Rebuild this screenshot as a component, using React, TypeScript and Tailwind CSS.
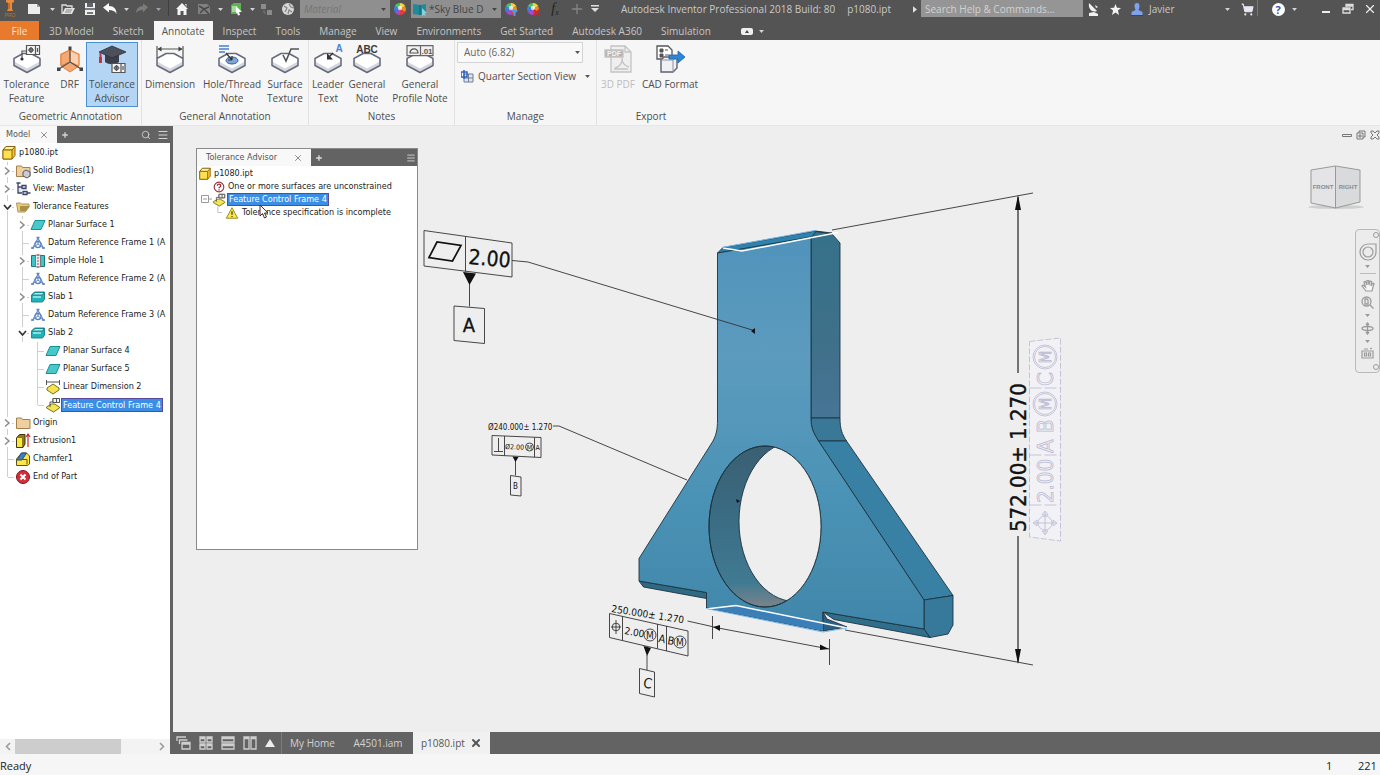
import type { ReactNode } from "react";
import { Menu, Plus, Search, ShoppingCart, X } from "lucide-react";

function Caret({ className = "text-gray-300" }: { className?: string }) {
  return (
    <svg viewBox="0 0 8 5" className={`h-[3px] w-[5px] shrink-0 ${className}`} fill="currentColor">
      <path d="M0 0h8L4 5z" />
    </svg>
  );
}

function IconButton({ label, className, children }: { label: string; className: string; children: ReactNode }) {
  return (
    <button type="button" aria-label={label} className={`flex h-[18px] shrink-0 items-center justify-center ${className}`}>
      {children}
    </button>
  );
}

function ColorWheel() {
  return (
    <g>
      <path d="M7 7V1A6 6 0 0 1 12.2 4z" fill="#f6d33c" />
      <path d="M7 7L12.2 4A6 6 0 0 1 12.2 10z" fill="#f08a24" />
      <path d="M7 7L12.2 10A6 6 0 0 1 7 13z" fill="#e23b3b" />
      <path d="M7 7V13A6 6 0 0 1 1.8 10z" fill="#a24bd0" />
      <path d="M7 7L1.8 10A6 6 0 0 1 1.8 4z" fill="#3b7fe0" />
      <path d="M7 7L1.8 4A6 6 0 0 1 7 1z" fill="#4cc06a" />
      <circle cx="7" cy="6" r="2.2" fill="#fff" opacity=".7" />
    </g>
  );
}

function TitleBar() {
  return (
    <div className="flex h-[21px] items-start overflow-hidden bg-[#545454] text-[10px] text-[#c9c9c9]">
      <IconButton label="Inventor" className="w-5">
        <svg viewBox="0 0 12 18" className="h-[18px] w-3">
          <path d="M2 0h8v2L8 3v6l1 2H3l1-2V3L2 2z" fill="#e98a3a" />
          <path d="M4.500 3h1v6h-1z" fill="#9b5415" />
          <text x="6" y="17" fontSize="5" textAnchor="middle" fill="#c06f2c" fontFamily="Liberation Sans, sans-serif">PRO</text>
        </svg>
      </IconButton>
      <IconButton label="New" className="w-7">
        <svg viewBox="0 0 14 12" className="h-3 w-3.5">
          <path d="M1 1h9l3 3v7H1z" fill="#ececec" />
          <path d="M10 1v3h3z" fill="#9a9a9a" />
        </svg>
      </IconButton>
      <IconButton label="New options" className="w-2"><Caret /></IconButton>
      <IconButton label="Open" className="w-6">
        <svg viewBox="0 0 14 12" className="h-3 w-3.5">
          <path d="M1 11V2h4l1 1h5v2" fill="none" stroke="#e0e0e0" strokeWidth="1.300" />
          <path d="M1 11l3-6h10l-3 6z" fill="#e0e0e0" />
          <path d="M5 7h6M4 9h6" stroke="#888" />
        </svg>
      </IconButton>
      <IconButton label="Save" className="w-5">
        <svg viewBox="0 0 12 14" className="h-3.5 w-3">
          <path d="M1 1h10v12H1z" fill="#efefef" />
          <path d="M3 1h6v4H3z" fill="#5d6470" />
          <path d="M0 7h12" stroke="#545454" strokeWidth="1.500" />
          <path d="M3 10h6v2H3z" fill="#777" />
        </svg>
      </IconButton>
      <IconButton label="Undo" className="w-5">
        <svg viewBox="0 0 14 12" className="h-3 w-3.5">
          <path d="M0 4.500L6 0v3c5 0 7.500 3 7.500 8-1.500-3-4-4-7.500-4v2.500z" fill="#fafafa" />
        </svg>
      </IconButton>
      <IconButton label="Undo options" className="w-3"><Caret /></IconButton>
      <IconButton label="Redo" className="w-5">
        <svg viewBox="0 0 14 12" className="h-3 w-3.5">
          <path d="M13 4L8 0.500V3C4 3 1 6 1 10c1-2 4-3 7-3v2.500z" fill="#7b7b7b" />
        </svg>
      </IconButton>
      <IconButton label="Redo options" className="w-3"><Caret className="text-gray-400" /></IconButton>
      <div className="flex h-5 w-2 shrink-0 justify-center"><span className="h-4 w-px bg-[#404040]" /></div>
      <IconButton label="Home" className="w-5">
        <svg viewBox="0 0 12 12" className="h-3 w-3">
          <path d="M6 0l6 6h-1.500v6h-3V8h-3v4h-3V6H0z" fill="#f4f4f4" />
          <path d="M9 1h1.500v3z" fill="#f4f4f4" />
        </svg>
      </IconButton>
      <IconButton label="Return" className="w-6">
        <svg viewBox="0 0 14 12" className="h-3 w-3.5">
          <path d="M1 1h9l3 3v7H1z" fill="#818181" />
          <path d="M2 3l5 3 5-2M3 10l4-4 5 5" stroke="#474747" fill="none" strokeWidth="1.500" />
        </svg>
      </IconButton>
      <IconButton label="Return options" className="w-2"><Caret /></IconButton>
      <IconButton label="Select" className="w-6">
        <svg viewBox="0 0 13 14" className="h-3.5 w-[13px]">
          <path d="M1 3l3-2h7v8l-3 3H1z" fill="#5db455" />
          <path d="M2 4h5v6H2z" fill="#a5dc9b" />
          <path d="M6 4l6 6H9l1 3-2 .500-1-3-1 1z" fill="#fff" />
        </svg>
      </IconButton>
      <IconButton label="Select options" className="w-2"><Caret /></IconButton>
      <IconButton label="Update" className="w-5">
        <svg viewBox="0 0 14 14" className="h-3.5 w-3.5">
          <path d="M2 2h5v5H2zM8 8h5v5H8z" fill="#8b8b8b" />
          <path d="M5 8v3h2" stroke="#777" fill="none" />
        </svg>
      </IconButton>
      <IconButton label="Appearance browser" className="w-6">
        <svg viewBox="0 0 14 14" className="h-3.5 w-3.5">
          <circle cx="7" cy="7" r="6" fill="#d7d7d7" />
          <path d="M3 4l3 2-2 4M8 2l2 3 3 1M7 12l1-4 3 2" fill="none" stroke="#828282" strokeWidth="1.200" />
        </svg>
      </IconButton>
      <label className="flex h-[18px] w-[90px] shrink-0 items-center bg-[#8f8f8f] pr-1">
        <select aria-label="Material" disabled className="min-w-0 flex-1 appearance-none bg-transparent pl-1 text-[#767676] italic">
          <option>Material</option>
        </select>
        <Caret className="text-[#444]" />
      </label>
      <IconButton label="Adjust appearance" className="w-5">
        <svg viewBox="0 0 14 14" className="h-3.5 w-3.5"><ColorWheel /></svg>
      </IconButton>
      <label className="ml-px flex h-[18px] w-[90px] shrink-0 items-center bg-[#8f8f8f] pr-1 pl-0.5">
        <svg viewBox="0 0 14 13" className="h-[13px] w-3.5 shrink-0">
          <path d="M0 1l7 1 6-1v10l-6 1-7-1z" fill="#1f8a99" />
          <path d="M7 2v10" stroke="#0f6370" />
          <path d="M9 5l5 5-2 .500L13 13l-2-1-2 1z" fill="#8ed0d8" />
        </svg>
        <select aria-label="Appearance" className="mr-2 min-w-0 flex-1 appearance-none bg-transparent pl-0.5 text-[#444]">
          <option>*Sky Blue D</option>
        </select>
        <Caret className="text-[#444]" />
      </label>
      <IconButton label="Adjust" className="w-5">
        <svg viewBox="0 0 14 14" className="h-3.5 w-3.5">
          <ColorWheel />
          <path d="M7 8h7l-2.500 3v3h-2v-3z" fill="#4b9be8" />
        </svg>
      </IconButton>
      <IconButton label="Clear overrides" className="w-6">
        <svg viewBox="0 0 14 14" className="h-3.5 w-3.5">
          <ColorWheel />
          <path d="M8 8l5 5M13 8l-5 5" stroke="#d5232b" strokeWidth="2" />
        </svg>
      </IconButton>
      <IconButton label="Parameters" className="w-5">
        <span className="font-['Liberation_Serif',serif] text-[14px] leading-4 text-[#222] italic">f<sub className="text-[8px]">x</sub></span>
      </IconButton>
      <IconButton label="Measure" className="w-6"><Plus className="size-4 text-[#858585]" /></IconButton>
      <IconButton label="Customize" className="w-3">
        <svg viewBox="0 0 8 8" className="size-2" fill="#e0e0e0"><path d="M0 0h8v1.500H0zM0 3h8L4 7z" /></svg>
      </IconButton>
      <span className="ml-5 truncate leading-[18px]">Autodesk Inventor Professional 2018 Build: 80</span>
      <span className="ml-3 leading-[18px]">p1080.ipt</span>

      <div className="ml-auto flex shrink-0 items-start">
        <IconButton label="Expand search" className="w-3">
          <svg viewBox="0 0 5 8" className="h-[7px] w-1" fill="#e0e0e0"><path d="M0 0l5 4-5 4z" /></svg>
        </IconButton>
        <input
          type="search"
          aria-label="Search Help & Commands"
          placeholder="Search Help & Commands..."
          className="h-[17px] w-[162px] rounded-none bg-[#959595] px-1 text-[#eee] placeholder:text-[#d2d2d2]"
        />
        <IconButton label="Communication center" className="w-5">
          <svg viewBox="0 0 12 13" className="h-[13px] w-3" fill="#f2f2f2">
            <path d="M2 0l8 8c-5 2-9-2-8-8zM2 10l5-1 4 2v2H2zM8 2l3 2-2 1z" />
          </svg>
        </IconButton>
        <IconButton label="Favorites" className="w-6">
          <svg viewBox="0 0 12 12" className="size-[11px]" fill="#f4f4f4">
            <path d="M6 0l1.600 4.200L12 4.400 8.600 7.200 9.800 12 6 9.200 2.200 12l1.200-4.800L0 4.400l4.400-.2z" />
          </svg>
        </IconButton>
        <IconButton label="Account" className="w-5">
          <svg viewBox="0 0 12 13" className="h-[13px] w-3" fill="#7ea2ec">
            <path d="M3.500 3a2.500 3 0 0 1 5 0c0 2-1 3-1 4l4 2v3H.500V9l4-2c0-1-1-2-1-4z" />
            <path d="M0 12.500h12" stroke="#28467c" />
          </svg>
        </IconButton>
        <span className="w-[74px] pl-0.5 leading-[18px]">Javier</span>
        <IconButton label="Account options" className="w-3"><Caret /></IconButton>
        <IconButton label="App store" className="ml-1 w-5"><ShoppingCart className="size-[13px] fill-[#e8e8f4] text-[#e8e8f4]" /></IconButton>
        <span className="h-4 w-px bg-[#777]" />
        <IconButton label="Help" className="ml-2.5 w-5">
          <span className="flex size-[13px] items-center justify-center rounded-full bg-white text-[11px] leading-none font-bold text-[#3d55a8]">?</span>
        </IconButton>
        <IconButton label="Help options" className="w-3"><Caret /></IconButton>
        <IconButton label="Minimize" className="ml-4 w-5">
          <svg viewBox="0 0 8 8" className="size-2"><path d="M0 7h8" stroke="#eee" strokeWidth="2" /></svg>
        </IconButton>
        <IconButton label="Restore" className="w-6">
          <svg viewBox="0 0 12 12" className="size-3" fill="none" stroke="#ddd" strokeWidth="1.300">
            <path d="M1 5h7v5H1zM1 6.500h7M4 4V1.500h7v5H9M4 3h7" />
          </svg>
        </IconButton>
        <IconButton label="Close" className="w-5"><X className="size-3.5 text-[#eee]" /></IconButton>
      </div>
    </div>
  );
}

const tabs = [
  "3D Model",
  "Sketch",
  "Annotate",
  "Inspect",
  "Tools",
  "Manage",
  "View",
  "Environments",
  "Get Started",
  "Autodesk A360",
  "Simulation",
];

function RibbonTabs() {
  return (
    <nav className="flex h-[19px] items-stretch gap-px bg-[#545454] text-[10px] text-[#c6c6c6]">
      <button type="button" className="w-[39px] bg-[#e97a2c] pt-px text-[#fbe3cf]">File</button>
      {tabs.map((tab) => (
        <button
          key={tab}
          type="button"
          className={tab === "Annotate" ? "bg-[#f6f6f6] px-2 pt-px text-[#555] whitespace-nowrap" : "px-[9px] pt-px whitespace-nowrap"}
        >
          {tab}
        </button>
      ))}
      <button type="button" aria-label="Minimize ribbon" className="ml-5 flex items-center gap-1.5 pt-px">
        <svg viewBox="0 0 12 7" className="h-[7px] w-3">
          <rect width="12" height="7" rx="2" fill="#eee" />
          <path d="M4 5l2-3 2 3z" fill="#444" />
        </svg>
        <Caret />
      </button>
    </nav>
  );
}

// the white slab that most ribbon icons sit on
function Slab() {
  return (
    <g stroke="#666a7a" strokeWidth="1.500" strokeLinejoin="round">
      <path d="M1 13.500L10 8.500h8l9 5v7L14 27.500 1 20.500z" fill="#d4d7e0" />
      <path d="M2 14l8.500-4.500h7L26 14v3l-12 6.500L2 17z" fill="#fff" stroke="none" />
    </g>
  );
}

function FrameSign({ x, y }: { x: number; y: number }) {
  return (
    <g transform={`translate(${x} ${y})`} fill="none" stroke="#555" strokeWidth="1.200">
      <path d="M.500 .500h13v9H.500zM9.500 .500v9" fill="#f4f4f4" />
      <path d="M5 2v6M2 5h6M11.500 3v4" />
      <circle cx="5" cy="5" r="1.800" />
    </g>
  );
}

const ribbonIcons: Record<string, ReactNode> = {
  feature: (
    <>
      <Slab />
      <path d="M9 14V6h5" fill="none" stroke="#555" strokeWidth="1.200" />
      <circle cx="9" cy="14" r="1.600" fill="#333" />
      <FrameSign x={13} y={0} />
    </>
  ),
  drf: (
    <>
      <path d="M14 5l9 4.500V20l-9 6-9-6V9.500z" fill="#fbd0ae" stroke="#e5823c" strokeWidth="1.300" />
      <path d="M14 5v12l-9 4V9.500zM14 17l9 4-9 6-9-6z" fill="#f4a873" stroke="#e5823c" />
      <path d="M14 3v14L3 24M14 17l11 7" stroke="#555" strokeWidth="1.200" fill="none" />
      <path d="M12.500 1.500h3v3.500h-3zM1 22.500h3.500V26H1zM23.500 22.500H27V26h-3.500z" fill="#444" />
    </>
  ),
  advisor: (
    <>
      <path d="M7 10v7c4 3 10 3 14 0v-7z" fill="#3c3f49" />
      <path d="M14 1l14 6-14 6L1 7z" fill="#4c505c" stroke="#2d2f37" strokeWidth=".8" />
      <path d="M2.500 8v9" stroke="#c1343c" strokeWidth="2" />
      <path d="M1 12h3v6H1z" fill="#c1343c" />
      <FrameSign x={13.500} y={18} />
    </>
  ),
  dimension: (
    <>
      <Slab />
      <path d="M1 1v12M27 1v12M2 4h24" stroke="#555" strokeWidth="1.200" fill="none" />
      <path d="M1.500 4l4-2.500v5zM26.500 4l-4-2.500v5z" fill="#444" />
    </>
  ),
  hole: (
    <>
      <Slab />
      <ellipse cx="14" cy="15.500" rx="6" ry="3.500" fill="#7fa6d8" stroke="#355c93" />
      <path d="M1 1h10M1 4h10M1 7h6" stroke="#4a7fd0" strokeWidth="1.600" />
      <path d="M8 8l6 7M14 15v-4M14 15h-4" stroke="#333" fill="none" strokeWidth="1.200" />
    </>
  ),
  surface: (
    <>
      <Slab />
      <path d="M12 10l3 6 5-12h8" fill="none" stroke="#555" strokeWidth="1.600" />
    </>
  ),
  leader: (
    <>
      <Slab />
      <path d="M19 8l-5 5" stroke="#333" strokeWidth="1.400" />
      <path d="M13 8v6.500h6z" fill="#333" />
      <text x="25" y="7" fontSize="10" fontWeight="bold" textAnchor="middle" fill="#3f86dc">A</text>
    </>
  ),
  note: (
    <>
      <Slab />
      <text x="14" y="8" fontSize="10" fontWeight="bold" textAnchor="middle" fill="#3a3a3a">ABC</text>
    </>
  ),
  profile: (
    <>
      <Slab />
      <path d="M1 .700h26v10H1zM14.500 .700v10" fill="#f0f0f0" stroke="#666" strokeWidth="1.200" />
      <path d="M4 8a3.800 4 0 0 1 8 0z" fill="none" stroke="#555" strokeWidth="1.200" />
      <text x="21" y="8.500" fontSize="8" fontWeight="bold" textAnchor="middle" fill="#555">.01</text>
    </>
  ),
  pdf: (
    <g stroke="#c3c3c3" strokeWidth="1.300" fill="none">
      <path d="M7 1h14l6 6v20H7z" fill="#efefef" />
      <path d="M21 1v6h6" />
      <path d="M11 23c5-1 8-6 7-10 0 5 3 8 7 9M10 24h14" />
      <path d="M1 5h18v7H1z" fill="#b4b4b4" />
      <text x="10" y="11" fontSize="7" fontWeight="bold" textAnchor="middle" fill="#f4f4f4" stroke="none">PDF</text>
    </g>
  ),
  cad: (
    <>
      <path d="M1 1h11l4 4v9H1z" fill="#fff" stroke="#555" strokeWidth="1.300" />
      <path d="M4 4h3v3H4zM4 9h3v3H4zM9 5h3M9 10h4" fill="#555" stroke="#555" />
      <path d="M5 15l3-3h13v11l-4 4H5z" fill="#f0f1f5" stroke="#5e6270" strokeWidth="1.400" />
      <path d="M5 15h12v12M17 15l4-3" stroke="#8c90a0" fill="none" />
      <path d="M13 10h9V6l7 6-7 6v-4h-9z" fill="#2f85d8" stroke="#1f62a8" strokeWidth=".8" />
    </>
  ),
};

type RibbonButtonProps = { icon: string; lines: string[]; className: string; disabled?: boolean };

function RibbonButton({ icon, lines, className, disabled }: RibbonButtonProps) {
  return (
    <button type="button" disabled={disabled} className={`flex h-[65px] shrink-0 flex-col items-center border pt-0.5 ${className}`}>
      <svg viewBox="0 0 28 28" className="mb-1 size-7 overflow-visible font-['Liberation_Sans',sans-serif]">{ribbonIcons[icon]}</svg>
      {lines.map((line) => (
        <span key={line} className="leading-[14px] whitespace-nowrap">{line}</span>
      ))}
    </button>
  );
}

function RibbonGroup({ title, className, children }: { title: string; className: string; children: ReactNode }) {
  return (
    <section className={`flex shrink-0 flex-col border-r border-[#e2e2e2] pt-0.5 ${className}`}>
      <div className="flex h-[67px]">{children}</div>
      <h2 className="text-center leading-[18px]">{title}</h2>
    </section>
  );
}

function Ribbon() {
  const plain = "border-transparent";
  return (
    <div className="flex h-[86px] border-b border-[#e6e6e6] bg-[#f6f6f6] text-[10px] text-[#4d4d4d]">
      <RibbonGroup title="Geometric Annotation" className="w-[142px]">
        <RibbonButton icon="feature" lines={["Tolerance", "Feature"]} className={`w-[53px] ${plain}`} />
        <RibbonButton icon="drf" lines={["DRF"]} className={`w-[33px] ${plain}`} />
        <RibbonButton icon="advisor" lines={["Tolerance", "Advisor"]} className="w-[52px] border-[#4a8fd0] bg-[#b4d5f4]" />
      </RibbonGroup>
      <RibbonGroup title="General Annotation" className="w-[167px]">
        <RibbonButton icon="dimension" lines={["Dimension"]} className={`w-14 ${plain}`} />
        <RibbonButton icon="hole" lines={["Hole/Thread", "Note"]} className={`w-[68px] ${plain}`} />
        <RibbonButton icon="surface" lines={["Surface", "Texture"]} className={`w-[38px] ${plain}`} />
      </RibbonGroup>
      <RibbonGroup title="Notes" className="w-[146px]">
        <RibbonButton icon="leader" lines={["Leader", "Text"]} className={`w-[38px] ${plain}`} />
        <RibbonButton icon="note" lines={["General", "Note"]} className={`w-10 ${plain}`} />
        <RibbonButton icon="profile" lines={["General", "Profile Note"]} className={`w-[66px] ${plain}`} />
      </RibbonGroup>
      <RibbonGroup title="Manage" className="w-[142px]">
        <div className="flex w-full flex-col px-0.5">
          <label className="flex h-[21px] w-[126px] items-center border border-[#d4d4d4] bg-[#f9f9f9] pr-0.5">
            <select aria-label="Annotation scale" className="min-w-0 flex-1 appearance-none bg-transparent pl-1.5 text-[#666]">
              <option>Auto (6.82)</option>
            </select>
            <Caret className="text-[#555]" />
          </label>
          <button type="button" className="mt-[3px] flex h-5 items-center pl-1">
            <svg viewBox="0 0 13 13" className="mr-1 size-[13px]" fill="none">
              <path d="M3 4h9v8H3zM3 8h9M7.500 4v8" stroke="#6f7c95" fill="#dfe6f2" />
              <path d="M0 2h6v5H0zM3 0v9" stroke="#2f63c4" strokeWidth="1.500" />
            </svg>
            Quarter Section View
            <span className="mr-1 ml-auto"><Caret className="text-[#555]" /></span>
          </button>
        </div>
      </RibbonGroup>
      <section className="flex w-[108px] shrink-0 flex-col pt-0.5">
        <div className="flex h-[67px]">
          <RibbonButton icon="pdf" lines={["3D PDF"]} disabled className={`w-[42px] text-[#bdbdbd] ${plain}`} />
          <RibbonButton icon="cad" lines={["CAD Format"]} className={`w-[62px] ${plain}`} />
        </div>
        <h2 className="text-center leading-[18px]">Export</h2>
      </section>
    </div>
  );
}

const cube = (
  <g stroke="#8a6410" strokeWidth="1">
    <path d="M2 5l3-3.500h9v9L11 14H2z" fill="#fbc02d" />
    <path d="M2 5l3-3.500h9L11 5z" fill="#fff3a6" />
    <path d="M2 5h9v9H2z" fill="#ffe14f" />
  </g>
);
const folder = <path d="M1.500 3h5l1 1.500H15v9H1.500z" fill="#efcf9e" stroke="#a5804a" />;
const planar = <path d="M5 3.500h10l-4 9H1z" fill="#45c9cb" stroke="#1c8f94" />;
const slab = (
  <g stroke="#138086" strokeWidth=".9">
    <path d="M1.500 6l3-3h10v7l-2 3h-11z" fill="#23b2b8" />
    <path d="M2 6l3-2.500h9L12.500 6z" fill="#a9eef0" />
    <path d="M3 8h8" stroke="#a9eef0" strokeWidth="1.500" />
  </g>
);
const datum = (
  <g fill="none" stroke="#5d83c4" strokeWidth="1.300">
    <path d="M8 2V9L2 13.500M8 9l6 4.500M2.500 13L8 3l5.500 10" strokeWidth="1" />
    <circle cx="8" cy="9.500" r="3" />
    <path d="M6.500 2.500h3M1 13h3M12 13h3" />
  </g>
);
const controlFrame = (
  <g strokeWidth="1">
    <path d="M1.500 10l5-3h3l5 3v1l-6 4-7-4z" fill="#f5e451" stroke="#7b6f1d" />
    <path d="M5 10V5h3V1.500h6.500v4H8" fill="none" stroke="#555" />
    <path d="M8 1.500h6.500v4H8zM11.500 1.500v4" fill="#f3f3f3" stroke="#555" />
  </g>
);

const treeIcons: Record<string, ReactNode> = {
  cube,
  folder,
  planar,
  slab,
  datum,
  controlFrame,
  solids: (
    <>
      {folder}
      <path d="M8 9l3-2 4 2v4l-3 2-4-2z" fill="#c9ccd8" stroke="#555b70" />
    </>
  ),
  view: <path d="M3 2v10h4M3 6h4M1.500 2h4M7 4.500h4v3H7zM8 10.500h4v3H8zM12 12h3.500" fill="#dbe0f0" stroke="#3c4468" strokeWidth="1.300" />,
  tolerances: (
    <>
      <path d="M1.500 4h4l1 1H14v3l-4 5H3z" fill="#e9cc7c" stroke="#b59255" />
      <path d="M5 7h10l-4 5H5z" fill="#a99147" />
    </>
  ),
  hole: (
    <>
      <path d="M1.500 2.500h13v11h-13z" fill="#3fc5c8" stroke="#167b80" />
      <path d="M5.500 2v12h5V2z" fill="#e5eef0" stroke="#666" strokeWidth=".8" />
      <path d="M8 1v14" stroke="#c0434a" strokeDasharray="2 1" />
    </>
  ),
  linear: (
    <>
      <path d="M2 9l6-4 6 4v2l-6 4-6-4z" fill="#f5e451" stroke="#7b6f1d" />
      <path d="M1.500 1v5M14.500 1v5M2 3h12" stroke="#555" fill="none" />
    </>
  ),
  extrusion: (
    <>
      <path d="M1.500 5l3-3.500H10V11l-2 3.500H1.500z" fill="#8a7a1e" stroke="#40390c" />
      <path d="M2 5h5v9H2z" fill="#ffe83e" />
      <path d="M13 2v12M11 4l2-3 2 3" stroke="#c92b2b" fill="none" strokeWidth="1.200" />
    </>
  ),
  chamfer: (
    <>
      <path d="M1.500 8l5-6h5l3 3v8l-2 1.500h-11z" fill="#ffe645" stroke="#5c5417" />
      <path d="M2 9l4.500-7h5L7 9z" fill="#3f7fc4" stroke="#27507e" />
      <path d="M7 8.500h5v5" stroke="#5c5417" fill="none" />
    </>
  ),
  end: (
    <>
      <circle cx="8" cy="8" r="6.500" fill="#d32f3a" stroke="#84141c" />
      <path d="M5.500 5.500l5 5M10.500 5.500l-5 5" stroke="#fff" strokeWidth="2" />
    </>
  ),
  question: (
    <>
      <circle cx="8" cy="8" r="5.500" fill="#fff" stroke="#9b2f3a" strokeWidth="1.300" />
      <path d="M6 6.500c0-2.500 4-2.500 4 0 0 1.500-2 1.500-2 3M8 10.500v1.500" stroke="#9b2f3a" strokeWidth="1.400" fill="none" />
    </>
  ),
  warning: (
    <>
      <path d="M8 2l6.500 12h-13z" fill="#ffe93b" stroke="#8d7d12" />
      <path d="M8 6v4M8 11.500v1.200" stroke="#333" strokeWidth="1.400" />
    </>
  ),
};

function TreeIcon({ name, className = "size-4" }: { name: string; className?: string }) {
  return <svg viewBox="0 0 16 16" className={`shrink-0 ${className}`}>{treeIcons[name]}</svg>;
}

// one cell of the tree's guide column: line, branch or chevron
type Guide = "none" | "line" | "branch" | "last" | "closed" | "open";

function GuideCell({ kind }: { kind: Guide }) {
  return (
    <svg viewBox="0 0 15 18" className="h-[18px] w-[15px] shrink-0" fill="none" stroke="#cfcfcf">
      {kind !== "none" && <path d={kind === "last" ? "M7.500 0v9" : "M7.500 0v18"} />}
      {kind !== "none" && kind !== "line" && <path d="M8 9.500h6" />}
      {kind === "closed" && (
        <>
          <path d="M3 3h9v12H3z" fill="#fff" stroke="none" />
          <path d="M5 5.500l4 3.500-4 3.500" stroke="#8a8a8a" strokeWidth="1.500" />
        </>
      )}
      {kind === "open" && (
        <>
          <path d="M3 3h9v10H3z" fill="#fff" stroke="none" />
          <path d="M4 7l3.500 4L11 7" stroke="#333" strokeWidth="1.700" />
        </>
      )}
    </svg>
  );
}

const modelTree: { label: string; icon: string; guides: Guide[]; selected?: boolean }[] = [
  { label: "Solid Bodies(1)", icon: "solids", guides: ["closed"] },
  { label: "View: Master", icon: "view", guides: ["closed"] },
  { label: "Tolerance Features", icon: "tolerances", guides: ["open"] },
  { label: "Planar Surface 1", icon: "planar", guides: ["line", "closed"] },
  { label: "Datum Reference Frame 1 (A", icon: "datum", guides: ["line", "branch"] },
  { label: "Simple Hole 1", icon: "hole", guides: ["line", "closed"] },
  { label: "Datum Reference Frame 2 (A", icon: "datum", guides: ["line", "branch"] },
  { label: "Slab 1", icon: "slab", guides: ["line", "closed"] },
  { label: "Datum Reference Frame 3 (A", icon: "datum", guides: ["line", "branch"] },
  { label: "Slab 2", icon: "slab", guides: ["line", "open"] },
  { label: "Planar Surface 4", icon: "planar", guides: ["line", "none", "branch"] },
  { label: "Planar Surface 5", icon: "planar", guides: ["line", "none", "branch"] },
  { label: "Linear Dimension 2", icon: "linear", guides: ["line", "none", "branch"] },
  { label: "Feature Control Frame 4", icon: "controlFrame", guides: ["line", "none", "last"], selected: true },
  { label: "Origin", icon: "folder", guides: ["closed"] },
  { label: "Extrusion1", icon: "extrusion", guides: ["closed"] },
  { label: "Chamfer1", icon: "chamfer", guides: ["branch"] },
  { label: "End of Part", icon: "end", guides: ["last"] },
];

const treeFont = "font-['DejaVu_Sans_Condensed','DejaVu_Sans',sans-serif] text-[9px] text-[#222]";
const selectedLabel = "border border-[#5a4a9c] bg-[#3b8de6] text-white";

function ModelBrowser() {
  return (
    <aside className="flex w-[173px] shrink-0 flex-col border-r-[3px] border-[#636363] bg-white">
      <div className="flex h-[17px] items-center bg-[#636363] text-[#d5d5d5]">
        <button type="button" className={`flex h-full w-[57px] items-center justify-between bg-[#f8f8f8] pr-2 pl-1.5 ${treeFont}`}>
          <span className="text-[#555]">Model</span>
          <X className="size-2.5 text-[#777]" />
        </button>
        <button type="button" aria-label="Add panel" className="pl-1"><Plus className="size-2" strokeWidth={4} /></button>
        <button type="button" aria-label="Search model" className="mr-1.5 ml-auto"><Search className="size-2.5" /></button>
        <button type="button" aria-label="Panel menu" className="mr-px"><Menu className="size-3" /></button>
      </div>
      <ul className={`flex-1 overflow-hidden pt-px ${treeFont}`}>
        <li className="flex h-[18px] items-center gap-0.5 pl-px whitespace-nowrap">
          <TreeIcon name="cube" />
          p1080.ipt
        </li>
        {modelTree.map((node) => (
          <li key={node.label} className="flex h-[18px] items-center whitespace-nowrap">
            {node.guides.map((kind, i) => <GuideCell key={i} kind={kind} />)}
            <TreeIcon name={node.icon} />
            <span className={node.selected ? `h-[14px] px-px leading-[12px] ${selectedLabel}` : "ml-0.5"}>{node.label}</span>
          </li>
        ))}
      </ul>
      <div className="flex h-[15px] items-center bg-[#f3f3f3] text-[#999]">
        <svg viewBox="0 0 15 15" className="size-[15px]" fill="none" stroke="currentColor" strokeWidth="1.500"><path d="M10 4L6.500 7.500 10 11" /></svg>
        <span className="h-full w-[106px] bg-[#cdcdcd]" />
        <svg viewBox="0 0 15 15" className="ml-auto size-[15px]" fill="none" stroke="currentColor" strokeWidth="1.500"><path d="M5 4l3.500 3.500L5 11" /></svg>
      </div>
    </aside>
  );
}

function MaterialCircle({ x, y, r, size }: { x: number; y: number; r: number; size: number }) {
  return (
    <g>
      <circle cx={x} cy={y} r={r} fill="none" />
      <text x={x} y={y + size * 0.36} fontSize={size} textAnchor="middle" stroke="none" fill="#222">M</text>
    </g>
  );
}

function PartDrawing() {
  return (
    <svg
      viewBox="173 126 1207 606"
      preserveAspectRatio="xMinYMin meet"
      className="absolute inset-0 h-full w-full font-['DejaVu_Sans_Condensed','DejaVu_Sans',sans-serif]"
    >
      <defs>
        <linearGradient id="front" x1="0" y1="0" x2="0" y2="1">
          <stop offset="0" stopColor="#5093bb" />
          <stop offset=".3" stopColor="#5c9bbe" />
          <stop offset=".65" stopColor="#4b93b6" />
          <stop offset="1" stopColor="#4086aa" />
        </linearGradient>
        <linearGradient id="side" x1="0" y1="0" x2="0" y2="1">
          <stop offset="0" stopColor="#35718a" />
          <stop offset=".6" stopColor="#3f7089" />
          <stop offset="1" stopColor="#467596" />
        </linearGradient>
        <linearGradient id="bore" x1="0" y1="0" x2="0" y2="1">
          <stop offset="0" stopColor="#3a5f72" />
          <stop offset=".4" stopColor="#3a6b82" />
          <stop offset=".85" stopColor="#407a92" />
          <stop offset="1" stopColor="#7d8389" />
        </linearGradient>
        <clipPath id="opening"><ellipse cx="765" cy="526.500" rx="56" ry="80.500" /></clipPath>
      </defs>

      <g stroke="#1d333e" strokeWidth=".9" strokeLinejoin="round">
        <path d="M717.500 253L723 247.500 815 231 832 233 811 239z" fill="#2f82ac" />
        <path d="M811 238L816 231.500 832 234 840 243V418H811z" fill="url(#side)" />
        <path d="M811 418H840C840 429 842 434 846.500 441H818.500C813 432 811 428 811 418z" fill="#3a7897" />
        <path d="M818.500 441H846.500L953 595.500 924 600z" fill="#3980a5" />
        <path d="M924 600L953 595.500V625L948 634 930 637.500 924 629z" fill="#36799b" />
        <path d="M823 612L924 629 930 637.500 834 619.500z" fill="#306f8c" />
        <path d="M639 581L643.500 587 706.500 598.500V592.500z" fill="#2f6a84" />
        <path
          d="M717.500 253L811 237V418C811 428 813 432 818.500 441L924 600V629L823 612V631L706.500 608V592.500L639 581V558.500L713 441C716 435 717.500 430 717.500 420z"
          fill="url(#front)"
        />
        <path d="M823 612L827 619 847 627 823 631z" fill="#2d5f83" />
        <path d="M712 609L736 605.500 823 621.500V631z" fill="#3b7fb8" stroke="none" />
        <ellipse cx="765" cy="526.500" rx="56" ry="80.500" fill="url(#bore)" />
        <g clipPath="url(#opening)"><ellipse cx="795" cy="521.500" rx="56" ry="80" fill="#eee" /></g>
        <ellipse cx="765" cy="526.500" rx="56" ry="80.500" fill="none" />
      </g>
      <g fill="none" stroke="#fff" strokeWidth="1.500">
        <path d="M723 248L742 251 838 232.500M706 609L736 605.500 847 628" />
        <path d="M722 247.500L815 230.500M706 608.500L823 632 847 628" stroke="#77b9ee" strokeWidth="1" />
      </g>

      <g fill="none" stroke="#333" strokeWidth=".9">
        <path d="M424 230.500L512 243V277L424 266zM465.500 236.500V271.500M469.500 284V306.500M454 306L484.500 308.500V343.500L454 340.500z" />
        <path d="M429 257.500L437 242 461 245.500 452.500 261z" strokeWidth="1.700" stroke="#111" />
        <path d="M512 260.500L528 262 754 330.500" />
        <path d="M553 426H559L687 480" />
        <path d="M492 435.500L541 437.500V457.500L492 455zM504.500 436V455.500M534.500 437.500V457M515.500 461V475.500M510.500 475.500L521 477V496L510.500 495z" />
        <path d="M498.500 438V451.500M494 451.500H503" />
        <path d="M609.500 613.500L688 631V656L609.500 637.500zM622.500 616.500V640.500M657.500 624V648.500M666.500 626V651M647 655V670M639.500 668.500L654.500 672V697L639.500 693.500z" />
        <path d="M616 620V634M611 627H621" />
        <circle cx="616" cy="627" r="3.800" />
        <path d="M687.500 621L712 626.500M712.500 616V639M829.500 639V665M713 627L829 649" />
        <path d="M832 230L1033 193M845 630L1033 665" />
        <path d="M1018 197V373M1018 536V662" strokeWidth="1.300" />
        <MaterialCircle x={529.500} y={447} r={4} size={7} />
        <MaterialCircle x={650} y={635} r={6} size={10} />
        <MaterialCircle x={680} y={642} r={6} size={10} />
      </g>
      <g fill="#111">
        <path d="M463 272L476 273.500 469.500 285zM512.500 456.500L518.500 457 515.500 462zM643.500 646L651 648 647 656z" />
        <path d="M713 627L720 625V631zM829 649L820 644.500V650zM1018 195L1021 210H1015zM1018 664L1015 649H1021zM755 328V334L751 331zM736 499L740 501 737 503z" />
        <text fontSize="21" transform="translate(468 264) rotate(5)" stroke="#111" strokeWidth=".3">2.00</text>
        <text x="469" y="332" fontSize="20" textAnchor="middle" stroke="#111" strokeWidth=".3">A</text>
        <text x="488" y="430" fontSize="8">Ø240.000± 1.270</text>
        <text fontSize="7" transform="translate(505 449) rotate(2)">Ø2.00</text>
        <text x="535.500" y="450" fontSize="7">A</text>
        <text x="515.500" y="489" fontSize="8" textAnchor="middle">B</text>
        <text fontSize="10" transform="translate(611 612) rotate(9)">250.000± 1.270</text>
        <text fontSize="10" transform="translate(624 634) rotate(10)">2.00</text>
        <text fontSize="11" transform="translate(658 642) rotate(10)">A</text>
        <text fontSize="11" transform="translate(667 644) rotate(10)">B</text>
        <text fontSize="14" textAnchor="middle" transform="translate(647 688) rotate(8)">C</text>
        <text fontSize="22" transform="translate(1026 532) rotate(-90)" stroke="#111" strokeWidth=".4">572.00± 1.270</text>
      </g>

      <g fill="#f2f2f6" stroke="#b9b9d2" strokeWidth=".8">
        <path d="M1029.500 341.500L1060.500 338V541L1029.500 537z" strokeDasharray="6 2" />
        <path d="M1029.500 388H1060.500M1029.500 455H1060.500M1029.500 505H1060.500" strokeDasharray="12 3" />
        <g fill="none">
          <circle cx="1045" cy="357" r="12" />
          <circle cx="1045" cy="357" r="10.500" />
          <circle cx="1045" cy="404" r="12" />
          <circle cx="1045" cy="404" r="10.500" />
          <circle cx="1045" cy="523" r="7" />
          <path d="M1033 523L1037 520V526zM1057 523L1053 520V526zM1045 511L1042 515H1048zM1045 535L1042 531H1048zM1034 523H1056M1045 512V534" />
        </g>
        <text fontSize="22" transform="translate(1053 503) rotate(-90)">2.00</text>
        <text fontSize="22" transform="translate(1053 453) rotate(-90)">A</text>
        <text fontSize="22" transform="translate(1053 433) rotate(-90)">B</text>
        <text fontSize="22" transform="translate(1053 386) rotate(-90)">C</text>
        <text fontSize="16" textAnchor="middle" transform="translate(1051 404) rotate(-90)">M</text>
        <text fontSize="16" textAnchor="middle" transform="translate(1051 357) rotate(-90)">M</text>
      </g>
    </svg>
  );
}

function ToleranceAdvisor() {
  return (
    <section className={`absolute top-[22px] left-[23px] h-[402px] w-[222px] border border-[#8a8a8a] bg-white ${treeFont}`}>
      <div className="flex h-[17px] items-center bg-[#636363] text-[#ddd]">
        <button type="button" className="flex h-full w-[114px] items-center justify-between bg-[#f8f8f8] pr-2 pl-[9px] text-[#555]">
          Tolerance Advisor
          <X className="size-2.5 text-[#777]" />
        </button>
        <button type="button" aria-label="Add panel" className="pl-1"><Plus className="size-2" strokeWidth={4} /></button>
        <button type="button" aria-label="Panel menu" className="mr-px ml-auto"><Menu className="size-2.5" /></button>
      </div>
      <ul className="pt-px pl-px">
        <li className="flex h-[13px] items-center gap-0.5"><TreeIcon name="cube" className="size-3.5" />p1080.ipt</li>
        <li className="flex h-[13px] items-center gap-0.5 pl-3.5"><TreeIcon name="question" className="size-3.5" />One or more surfaces are unconstrained</li>
        <li className="flex h-[13px] items-center">
          <svg viewBox="0 0 14 13" className="h-[13px] w-3.5" fill="none" stroke="#999"><path d="M3.500 2.500h7v7h-7zM5 6h4M11 6h3" /></svg>
          <TreeIcon name="controlFrame" className="mr-px size-3.5" />
          <span className={`px-px leading-[11px] ${selectedLabel}`}>Feature Control Frame 4</span>
        </li>
        <li className="flex h-[13px] items-center gap-[3px]">
          <svg viewBox="0 0 26 13" className="h-[13px] w-6" fill="none" stroke="#bbb"><path d="M21.500 0v6.500H26" /></svg>
          <TreeIcon name="warning" className="size-3.5" />
          Tolerance specification is incomplete
        </li>
      </ul>
      <svg viewBox="0 0 10 15" className="absolute top-[55px] left-[62px] h-[15px] w-2.5">
        <path d="M1 1v11l2.500-2.500L5.500 14l2-1-2-4H9z" fill="#fff" stroke="#333" />
      </svg>
    </section>
  );
}

function ViewCube() {
  return (
    <svg viewBox="0 0 58 48" className="absolute top-[37px] right-[15px] h-12 w-[58px] font-['Liberation_Sans',sans-serif]">
      <ellipse cx="29" cy="44" rx="28" ry="2" fill="#cfcfcf" />
      <path d="M4 7L28.500 3V45L4 40z" fill="#e4e4e6" stroke="#999" />
      <path d="M28.500 3L53 7V39L28.500 45z" fill="#d9dadc" stroke="#999" />
      <g fontSize="6" fontWeight="bold" fill="#8b8b8b" textAnchor="middle">
        <text x="16" y="26">FRONT</text>
        <text x="41" y="26">RIGHT</text>
      </g>
    </svg>
  );
}

function NavigationBar() {
  const stroke = "#9b9b9b";
  return (
    <div className="absolute top-[103px] right-0 flex h-[144px] w-[25px] flex-col items-center justify-between rounded border border-[#b9b9b9] bg-[#ececec] py-0.5">
      <svg viewBox="0 0 6 6" className="size-1.5 self-end" fill="none" stroke={stroke}><circle cx="3" cy="3" r="2.500" /></svg>
      <button type="button" aria-label="Steering wheel">
        <svg viewBox="0 0 18 18" className="size-[18px]" fill="none" stroke={stroke} strokeWidth="1.200">
          <path d="M9 1h8v8a8 8 0 1 1-8-8z" />
          <circle cx="9" cy="9" r="5" />
        </svg>
      </button>
      <Caret className="text-[#999]" />
      <span className="h-px w-4 bg-[#bbb]" />
      <button type="button" aria-label="Pan">
        <svg viewBox="0 0 14 13" className="h-[13px] w-3.5" fill="#f6f6f6" stroke={stroke} strokeWidth="1.200">
          <path d="M5 12L1 7l1-1 2.500 2L3 3l1.500-.500L6 6V1.500h1.500L8 6l1-4 1.500.500L10 7l2-3 1 .500-2 7.500z" />
        </svg>
      </button>
      <button type="button" aria-label="Zoom">
        <svg viewBox="0 0 13 13" className="size-[13px]" fill="none" stroke={stroke} strokeWidth="1.300">
          <circle cx="5.500" cy="5.500" r="4.500" />
          <path d="M4 3h2l1 1v4H4zM9 9l3.500 3.500" />
        </svg>
      </button>
      <Caret className="text-[#999]" />
      <button type="button" aria-label="Orbit">
        <svg viewBox="0 0 13 13" className="size-[13px]" fill="none" stroke={stroke} strokeWidth="1.300">
          <ellipse cx="6.500" cy="6.500" rx="5.500" ry="2" />
          <path d="M6.500 1v11M5 3l1.500-2L8 3M5 10l1.500 2L8 10" />
        </svg>
      </button>
      <Caret className="text-[#999]" />
      <button type="button" aria-label="Look at">
        <svg viewBox="0 0 13 12" className="h-3 w-[13px]" fill="none" stroke={stroke} strokeWidth="1.200">
          <path d="M1 4h11v7H1zM3 2h4M9 2l2-1M3.500 6h2v3h-2zM7.500 6h2v3h-2z" />
        </svg>
      </button>
      <svg viewBox="0 0 6 6" className="size-1.5 self-end" fill="none" stroke={stroke}><circle cx="3" cy="3" r="2.500" /></svg>
    </div>
  );
}

function DocumentTabs() {
  return (
    <div className="-ml-[3px] flex h-[22px] shrink-0 items-center bg-[#636363] text-[10px] text-[#d2d2d2]">
      <div className="flex w-[111px] items-center gap-2 pl-1.5 text-[#cfcfcf]">
        <button type="button" aria-label="Cascade">
          <svg viewBox="0 0 15 14" className="h-3.5 w-[15px]" fill="none" stroke="currentColor" strokeWidth="1.300">
            <path d="M1 5V1h9M3.500 8V4h8M6 6.500h8v6.500H6zM6 8h8" />
          </svg>
        </button>
        <button type="button" aria-label="Tile">
          <svg viewBox="0 0 14 14" className="size-3.5" fill="none" stroke="currentColor" strokeWidth="1.300">
            <path d="M1 1h5v5H1zM8 1h5v5H8zM1 8h5v5H1zM8 8h5v5H8zM1 2.500h5M8 2.500h5M1 9.500h5M8 9.500h5" />
          </svg>
        </button>
        <button type="button" aria-label="Tile horizontally">
          <svg viewBox="0 0 14 14" className="size-3.5" fill="none" stroke="currentColor" strokeWidth="1.300">
            <path d="M1 1h12v5H1zM1 8h12v5H1zM1 2.500h12M1 9.500h12" />
          </svg>
        </button>
        <button type="button" aria-label="Tile vertically">
          <svg viewBox="0 0 14 14" className="size-3.5" fill="none" stroke="currentColor" strokeWidth="1.300">
            <path d="M1 1h5v12H1zM8 1h5v12H8zM1 2.500h5M8 2.500h5" />
          </svg>
        </button>
        <button type="button" aria-label="Show all tabs">
          <svg viewBox="0 0 10 8" className="h-2 w-2.5" fill="#eee"><path d="M5 0l5 8H0z" /></svg>
        </button>
      </div>
      <button type="button" className="h-full w-[62px] border-l border-[#7d7d7d]">My Home</button>
      <button type="button" className="h-full w-[70px]">A4501.iam</button>
      <button type="button" className="flex h-full w-[77px] items-center justify-between bg-[#f1f1f1] pr-2 pl-2 text-[#555]">
        p1080.ipt
        <X className="size-3" strokeWidth={4} />
      </button>
    </div>
  );
}

export default function App() {
  return (
    <div className="flex min-h-screen flex-col bg-[#f6f6f6] font-['Open_Sans','Noto_Sans',sans-serif]">
      <header>
        <TitleBar />
        <RibbonTabs />
        <Ribbon />
      </header>
      <div className="flex flex-1">
        <ModelBrowser />
        <main className="flex min-w-0 flex-1 flex-col">
          <div className="relative flex-1 overflow-hidden bg-[#eeeeee]">
            <PartDrawing />
            <ToleranceAdvisor />
            <div className="absolute top-1 right-0 flex items-center gap-1 text-[#777]">
              <svg viewBox="0 0 10 10" className="size-2.5" fill="none" stroke="currentColor"><path d="M.500 4.500h9v2h-9z" /></svg>
              <svg viewBox="0 0 10 10" className="size-2.5" fill="none" stroke="currentColor"><path d="M1 3h6v6H1zM3 3V1h6v6H7M3 5h2v2H3z" /></svg>
              <svg viewBox="0 0 10 10" className="size-2.5" fill="none" stroke="currentColor"><path d="M1 1h2l2 2 2-2h2v2L7 5l2 2v2H7L5 7 3 9H1V7l2-2-2-2z" /></svg>
            </div>
            <ViewCube />
            <NavigationBar />
          </div>
          <DocumentTabs />
        </main>
      </div>
      <footer className="flex h-[21px] items-center bg-[#f6f6f6] pt-1 text-[11px] text-[#222]">
        <span>Ready</span>
        <span className="ml-auto w-8">1</span>
        <span className="w-[22px]">221</span>
      </footer>
    </div>
  );
}
